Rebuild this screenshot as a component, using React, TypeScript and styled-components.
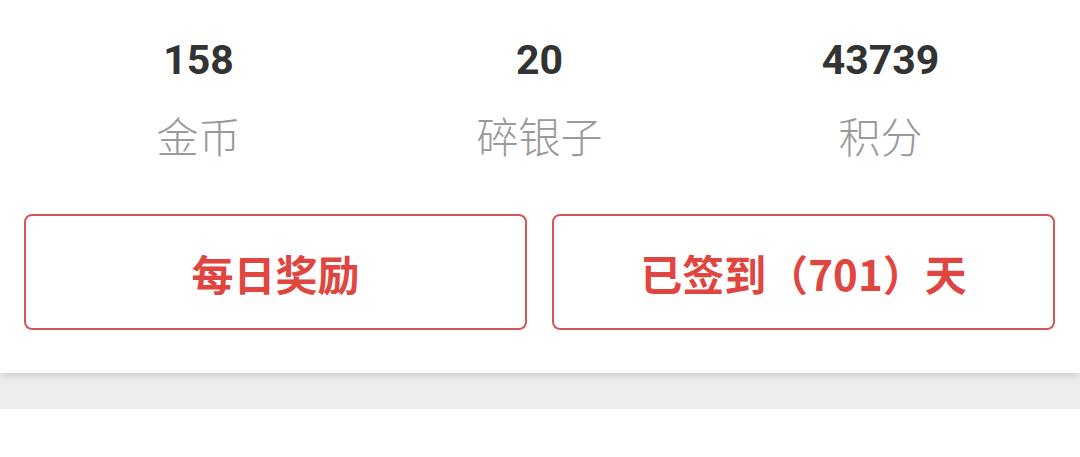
import React from 'react';
import styled, { createGlobalStyle } from 'styled-components';

const GlobalStyle = createGlobalStyle`
  html, body {
    margin: 0;
    padding: 0;
    background: #ffffff;
  }
  body {
    font-family: Roboto, "Noto Sans CJK SC", sans-serif;
  }
`;

const stats = [
  { value: '158', label: '金币' },
  { value: '20', label: '碎银子' },
  { value: '43739', label: '积分' },
];

export default function App() {
  return (
    <>
      <GlobalStyle />
      <Card>
        <StatsRow>
          {stats.map((s) => (
            <Stat key={s.label}>
              <Value>{s.value}</Value>
              <Label>{s.label}</Label>
            </Stat>
          ))}
        </StatsRow>
        <Actions>
          <ActionButton type="button">每日奖励</ActionButton>
          <ActionButton type="button">已签到（701）天</ActionButton>
        </Actions>
      </Card>
      <Divider />
      <Below />
    </>
  );
}

const Card = styled.section`
  position: relative;
  z-index: 1;
  background: #ffffff;
  padding: 36px 25px 43px 24px;
  box-shadow: 0 3px 8px rgba(0, 0, 0, 0.14);
`;

const StatsRow = styled.div`
  display: grid;
  grid-template-columns: repeat(3, 1fr);
  margin: 0 4px;
`;

const Stat = styled.div`
  display: flex;
  flex-direction: column;
  align-items: center;
  gap: 30px;
`;

const Value = styled.div`
  font-family: Roboto, sans-serif;
  font-weight: 700;
  font-size: 41px;
  line-height: 48px;
  color: #333333;
`;

const Label = styled.div`
  font-family: "Noto Sans CJK SC", sans-serif;
  font-weight: 300;
  font-size: 42px;
  line-height: 42px;
  color: #9a9a9a;
`;

const Actions = styled.div`
  display: grid;
  grid-template-columns: 1fr 1fr;
  gap: 25px;
  margin-top: 58px;
`;

const ActionButton = styled.button`
  display: flex;
  align-items: center;
  justify-content: center;
  height: 116px;
  box-sizing: border-box;
  border: 2px solid #d25757;
  border-radius: 8px;
  background: #ffffff;
  padding: 0;
  font-family: "Noto Sans CJK SC", sans-serif;
  font-weight: 700;
  font-size: 42px;
  color: #e0463f;
  cursor: pointer;
`;

const Divider = styled.div`
  height: 36px;
  background: #eeeeee;
`;

const Below = styled.div`
  height: 48px;
  background: #ffffff;
`;
